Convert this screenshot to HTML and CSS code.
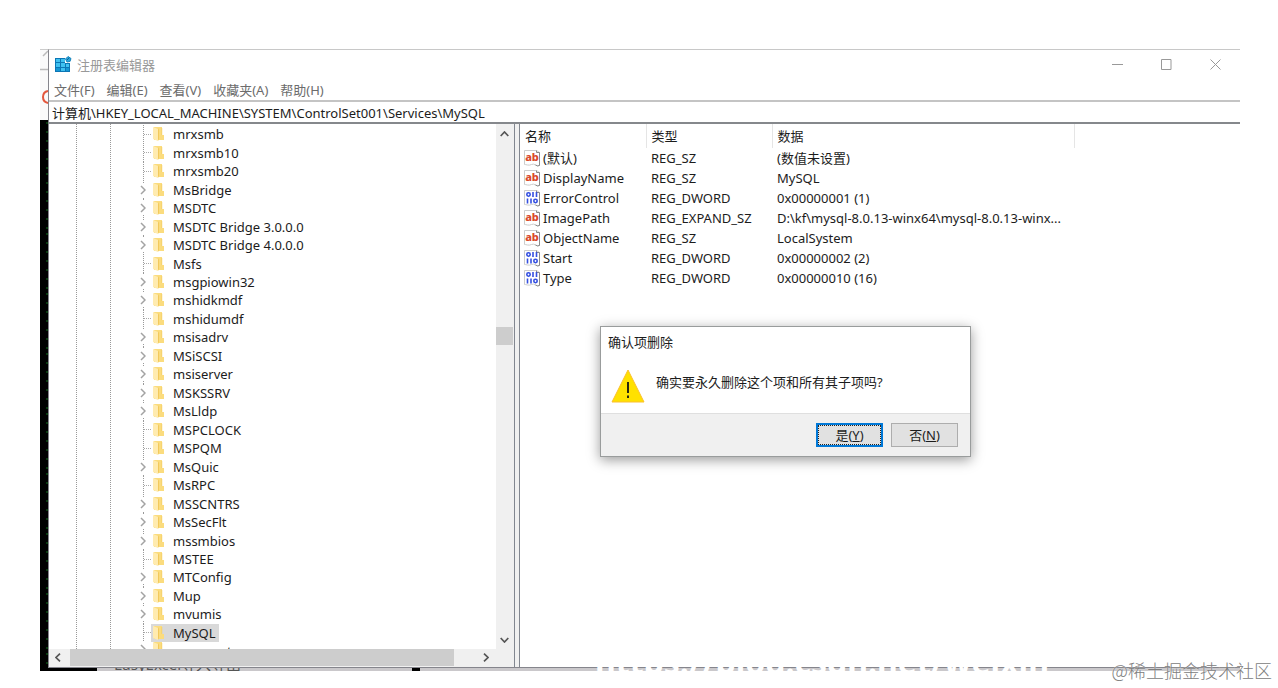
FILE: index.html
```html
<!DOCTYPE html>
<html lang="zh-CN">
<head>
<meta charset="utf-8">
<title>注册表编辑器</title>
<link rel="stylesheet" href="styles.css">
</head>
<body>
<svg width="0" height="0" class="defs" aria-hidden="true">
  <symbol id="folder" viewBox="0 0 12 14"><path fill="#fbdc7e" d="M1 0h8v8h2v5H1z"/><path fill="#ffebb0" d="M0 0l5 2v12l-5-2z"/><path fill="#f2c95c" d="M5 3l1-2v11l-1 2z"/><path fill="#f3cb62" d="M8.500 1h.7v7h-.7z"/></symbol>
  <symbol id="page" viewBox="0 0 17 17"><path fill="#fff" stroke="#ccc" d="M.5.5h12l3 2v13q-2 1-4-.5t-4-.5-4 .5-3-.5z"/><path fill="none" stroke="#8a8a8a" d="M12.500.5v2h3V15.500q-2 1-4-.5"/></symbol>
  <symbol id="str" viewBox="0 0 17 17"><use href="#page"/><text x="8" y="11" text-anchor="middle" font-family="Noto Sans" font-size="11" font-weight="800" fill="#d9482b">ab</text></symbol>
  <symbol id="bin" viewBox="0 0 17 17"><use href="#page"/><g fill="none" stroke="#3550e0" stroke-width="1.600"><rect x="2.800" y="2.800" width="3.400" height="3.400" rx="1.600"/><path d="M9 2v5M12.500 2v5M3.500 8.500v5M7 8.500v5"/><rect x="9.800" y="9.300" width="3.400" height="3.400" rx="1.600"/></g></symbol>
</svg>
<main class="desktop">
  <div class="behind-left" aria-hidden="true">
    <svg class="tab" width="8" height="70" viewBox="0 0 8 70"><path d="M3 6l5-5M0 19.500h8" stroke="#bbb" stroke-width="1.500" fill="none"/><path d="M8 41q-5 1-5 6t5 6" fill="none" stroke="#e4573d" stroke-width="2"/></svg>
    <div class="rain"></div>
  </div>
  <section class="window">
    <header class="titlebar">
      <svg width="17" height="17" viewBox="0 0 17 17"><path fill="#0c76b5" d="M0 2h10v5h5v9H0z"/><path fill="#3fc1f0" d="M1 3h4v3H1zM6 3h4v3H6zM1 7h4v4H1zM6 7h4v4H6zM11 8h3v3h-3zM6 12h4v3H6z"/><path fill="#1596d4" d="M1 12h4v3H1zM11 12h3v3h-3z"/><path fill="#2aa4da" stroke="#1683bb" d="M13 .5l3 2-1 3-3 .5-1.500-3z"/><path stroke="#0c6799" d="M12 4l2-2"/></svg>
      <h1>注册表编辑器</h1>
      <div class="controls">
        <button aria-label="最小化"><svg width="11" height="11" viewBox="0 0 11 11"><path d="M0 5.500h11"/></svg></button>
        <button aria-label="最大化"><svg width="11" height="11" viewBox="0 0 11 11"><path d="M.5.5h9.500v10H.5z"/></svg></button>
        <button aria-label="关闭"><svg width="11" height="11" viewBox="0 0 11 11"><path d="M.5.5l10 10M10.500.5l-10 10"/></svg></button>
      </div>
    </header>
    <nav class="menu"><button>文件(F)</button><button>编辑(E)</button><button>查看(V)</button><button>收藏夹(A)</button><button>帮助(H)</button></nav>
    <input class="address" aria-label="地址" value="计算机\HKEY_LOCAL_MACHINE\SYSTEM\ControlSet001\Services\MySQL">
    <div class="panes">
      <div class="tree">
        <ul class="list" id="list"></ul>
        <div class="vbar"><svg width="9" height="6" viewBox="0 0 9 6"><path d="M.7 5l3.800-4 3.800 4"/></svg><div class="track"><i></i></div><svg width="9" height="6" viewBox="0 0 9 6"><path d="M.7 1l3.800 4 3.800-4"/></svg></div>
        <div class="hbar"><svg width="6" height="9" viewBox="0 0 6 9"><path d="M5 .7L1 4.500l4 3.800"/></svg><div class="track"><i></i></div><svg width="6" height="9" viewBox="0 0 6 9"><path d="M1 .7l4 3.800-4 3.800"/></svg></div>
      </div>
      <div class="values">
        <table>
          <colgroup><col class="c-name"><col class="c-type"><col class="c-data"><col></colgroup>
          <thead><tr><th>名称</th><th>类型</th><th>数据</th><th class="rest"></th></tr></thead>
          <tbody>
            <tr><td><span class="val"><svg><use href="#str"/></svg>(默认)</span></td><td>REG_SZ</td><td>(数值未设置)</td><td></td></tr>
            <tr><td><span class="val"><svg><use href="#str"/></svg>DisplayName</span></td><td>REG_SZ</td><td>MySQL</td><td></td></tr>
            <tr><td><span class="val"><svg><use href="#bin"/></svg>ErrorControl</span></td><td>REG_DWORD</td><td>0x00000001 (1)</td><td></td></tr>
            <tr><td><span class="val"><svg><use href="#str"/></svg>ImagePath</span></td><td>REG_EXPAND_SZ</td><td>D:\kf\mysql-8.0.13-winx64\mysql-8.0.13-winx...</td><td></td></tr>
            <tr><td><span class="val"><svg><use href="#str"/></svg>ObjectName</span></td><td>REG_SZ</td><td>LocalSystem</td><td></td></tr>
            <tr><td><span class="val"><svg><use href="#bin"/></svg>Start</span></td><td>REG_DWORD</td><td>0x00000002 (2)</td><td></td></tr>
            <tr><td><span class="val"><svg><use href="#bin"/></svg>Type</span></td><td>REG_DWORD</td><td>0x00000010 (16)</td><td></td></tr>
          </tbody>
        </table>
      </div>
    </div>
    <div class="dialog" role="dialog" aria-labelledby="dlg">
      <h2 id="dlg">确认项删除</h2>
      <div class="message">
        <svg width="34" height="34" viewBox="0 0 34 34"><path d="M17 1l16 32H1z" fill="#ffe100" stroke="#fbc02d" stroke-linejoin="round"/><path d="M17 13v11M17 26.500v2.500" stroke="#111" stroke-width="1.800"/></svg>
        <p>确实要永久删除这个项和所有其子项吗?</p>
      </div>
      <footer><button class="yes">是(<u>Y</u>)</button><button>否(<u>N</u>)</button></footer>
    </div>
  </section>
  <div class="behind-bottom" aria-hidden="true"><span class="black"></span><span class="note">EasyExcel导入导出</span><span class="chip"></span></div>
  <div class="blogmark" aria-hidden="true">https://blog.csdn.net/weixin</div>
</main>
<div class="watermark">@稀土掘金技术社区</div>
<script src="tree.js"></script>
</body>
</html>
```
FILE: tree.js
```js
// A leading "+" marks a key that can be expanded.
const keys = ["mrxsmb","mrxsmb10","mrxsmb20","+MsBridge","+MSDTC","+MSDTC Bridge 3.0.0.0","+MSDTC Bridge 4.0.0.0","Msfs","+msgpiowin32","+mshidkmdf","mshidumdf","+msisadrv","+MSiSCSI","+msiserver","+MSKSSRV","+MsLldp","MSPCLOCK","MSPQM","+MsQuic","MsRPC","+MSSCNTRS","+MsSecFlt","+mssmbios","MSTEE","+MTConfig","+Mup","+mvumis","MySQL","+napagent"];
document.getElementById("list").innerHTML = keys.map((key, i) => {
  const open = key[0] === "+";
  const name = key.replace("+", "");
  const cls = (open ? "branch" : "leaf") + (name === "MySQL" ? " selected" : "") + (i === keys.length - 1 ? " peek" : "");
  const chevron = open ? '<svg width="6" height="10" viewBox="0 0 6 10"><path d="M1 1l4 4-4 4"/></svg>' : "";
  return `<li class="${cls}"><span class="twist">${chevron}</span><button class="key"><svg class="folder"><use href="#folder"/></svg>${name}</button></li>`;
}).join("");
```
FILE: styles.css
```css
* { box-sizing: border-box; }
body {
  margin: 0;
  min-height: 100vh;
  display: flex;
  position: relative;
  padding: 49px 38px 17px 40px;
  background: #fff;
  color: #1c1c1c;
  font: 13px/18px "Noto Sans", "Noto Sans CJK SC", sans-serif;
}
button { font: inherit; color: inherit; background: none; border: 0; padding: 0; }
h1, h2, p, ul { margin: 0; padding: 0; font-size: 13px; font-weight: 400; }
svg { flex: none; }
.defs { position: absolute; }

.desktop { flex: 1; display: grid; grid-template: 1fr 3px / 8px 1fr; position: relative; min-width: 0; }
.behind-left { display: flex; flex-direction: column; background: #fafafa; border-top: 1px solid #ccc; }
.tab { display: block; }
.rain {
  flex: 1;
  background:
    linear-gradient(90deg, transparent 5px, #000 5px 6px, transparent 6px) 0 0 / 8px 5px,
    repeating-linear-gradient(#000 0 3px, #0a3a10 3px 5px, #000 5px 9px) 5px 110px / 3px 60px repeat-y,
    #000;
}
.behind-bottom { grid-column: 1 / -1; display: flex; align-items: flex-end; overflow: hidden; background: #cac8cb; }
.black { width: 57px; height: 3px; background: #000; }
.note { margin-left: 17px; width: 298px; font-size: 15px; line-height: 16px; height: 15px; color: #555; }
.chip { width: 8px; height: 3px; background: #000; }

.window {
  position: relative;
  display: flex;
  flex-direction: column;
  min-width: 0;
  background: #fff;
  border: solid #85858c;
  border-width: 1px 0 1px 1px;
  border-top-color: #c8c8c8;
}
.titlebar { display: flex; align-items: center; height: 29px; padding-left: 6px; gap: 5px; color: #999; }
.controls { margin-left: auto; display: flex; }
.controls button { width: 49px; height: 29px; display: grid; place-items: center; }
.controls path { fill: none; stroke: #999; }
.menu { display: flex; gap: 12px; height: 23px; padding-left: 5px; align-items: center; color: #6c6c6c; border-bottom: 2px solid #c4c4c4; }
.address { height: 20px; border: 0; padding: 0 3px; font: inherit; color: inherit; background: #fff; }
.panes { flex: 1; display: grid; grid-template-columns: 466px 1fr; gap: 4px; background: #f0f0f0; border-top: 2px solid #85888c; min-height: 0; }

.tree { display: grid; grid-template: 1fr 17px / 1fr 17px; padding: 0 1px 1px 0; background: #f0f0f0; border-right: 1px solid #828790; }
.list {
  list-style: none;
  display: flex;
  flex-direction: column;
  padding-top: 1px;
  background:
    repeating-linear-gradient(#999 0 1px, transparent 1px 2px) 27px 0 / 1px 100% no-repeat,
    repeating-linear-gradient(#999 0 1px, transparent 1px 2px) 61px 0 / 1px 100% no-repeat,
    #fff;
}
.list li { flex: 1 1 18px; display: flex; align-items: stretch; padding-left: 86px; }
.list .peek { flex: none; height: 7px; overflow: hidden; }
.twist { width: 16px; display: grid; place-items: center; background: repeating-linear-gradient(#999 0 1px, transparent 1px 2px) 8px 0 / 1px 100% no-repeat; }
.leaf .twist { background:
    repeating-linear-gradient(#999 0 1px, transparent 1px 2px) 8px 0 / 1px 100% no-repeat,
    repeating-linear-gradient(90deg, #aaa 0 1px, transparent 1px 2px) 9px 50% / 7px 1px no-repeat; }
.twist svg { width: 12px; height: 14px; padding: 2px 3px; background: #fff; }
.twist path { fill: none; stroke: #a3a3a3; stroke-width: 1.5; }
.key { display: flex; align-items: center; gap: 8px; padding: 0 3px 0 2px; line-height: 18px; white-space: nowrap; }
.peek .key { align-items: flex-start; }
.selected .key { background: #d9d9d9; }
.folder { width: 12px; height: 14px; }
.vbar, .hbar { display: flex; align-items: center; justify-content: space-between; background: #f0f0f0; }
.vbar { flex-direction: column; padding: 7px 0 6px; }
.hbar { grid-column: 1 / -1; padding: 0 24px 0 6px; }
.vbar path, .hbar path { fill: none; stroke: #555; stroke-width: 1.7; }
.track { flex: 1; display: flex; align-self: stretch; }
.vbar .track { flex-direction: column; padding-top: 190px; }
.hbar .track { padding: 0 29px 0 9px; }
.track i { background: #cdcdcd; }
.vbar i { height: 18px; }
.hbar i { flex: 1; }

.values { background: #fff; border-left: 1px solid #828790; min-width: 0; overflow: hidden; }
table { width: 100%; table-layout: fixed; border-collapse: collapse; }
.c-name { width: 126px; }
.c-type { width: 126px; }
.c-data { width: 302px; }
th, td { height: 20px; padding: 0 0 0 5px; text-align: left; font-weight: 400; white-space: nowrap; line-height: 18px; }
th { height: 24px; border-right: 1px solid #e5e5e5; }
th.rest { border: 0; }
td:first-child { padding-left: 4px; }
.val { display: flex; align-items: center; gap: 2px; }
.val svg { width: 17px; height: 17px; }

.dialog {
  position: absolute;
  left: 551px;
  top: 276px;
  width: 371px;
  background: #fff;
  border: 1px solid #999c9c;
  box-shadow: 0 3px 12px rgba(0, 0, 0, .4);
}
.dialog h2 { padding: 6px 7px 7px; line-height: 18px; }
.message { display: flex; gap: 11px; padding: 11px 10px 10px; }
.message p { padding-top: 4px; }
.dialog footer { display: flex; justify-content: flex-end; gap: 8px; padding: 9px 12px; background: #f0f0f0; border-top: 1px solid #dfdfdf; }
.dialog footer button { width: 67px; height: 24px; line-height: 18px; background: #e1e1e1; border: 1px solid #adadad; }
.dialog footer .yes { border: 2px solid #0078d7; outline: 1px dotted #222; outline-offset: -3px; }

.blogmark { position: absolute; left: 555px; bottom: -8px; font-size: 32px; line-height: 34px; color: #fff; font-weight: 700; pointer-events: none; }
.watermark { position: absolute; right: 6px; bottom: 6px; font: 18px/24px "Noto Sans CJK SC", sans-serif; font-weight: 300; color: #808080; text-shadow: 0 0 1px #fff; }
```
